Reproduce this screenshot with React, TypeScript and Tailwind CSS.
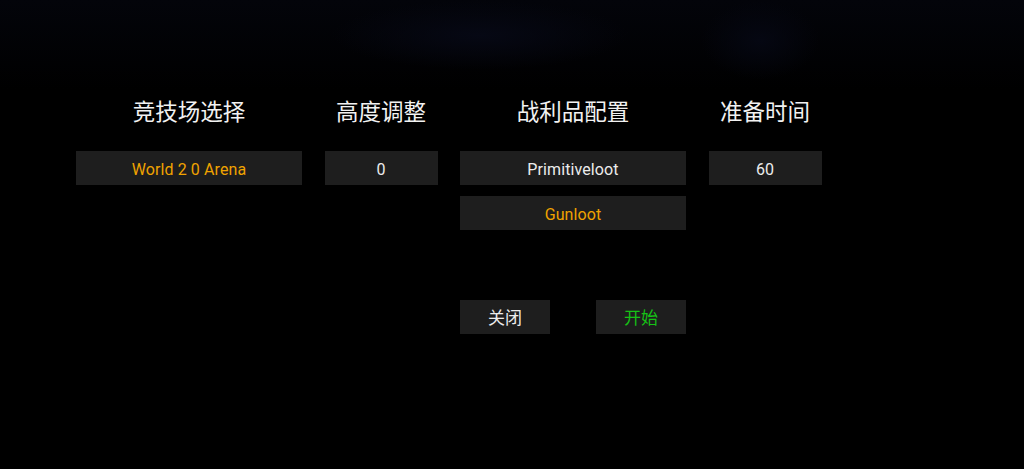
import React from 'react';

const titleFont = { fontFamily: '"Noto Sans CJK SC", "Noto Sans", sans-serif' };

function Cell({ label, width, color = 'text-[#ececec]' }: { label: string; width: string; color?: string }) {
  return (
    <div
      className={`${width} h-[34px] flex items-center justify-center pt-[3px] bg-[#1e1e1e] text-[16px] tracking-[0.1px] ${color}`}
      style={{ fontFamily: 'Roboto, "Noto Sans CJK SC", sans-serif' }}
    >
      {label}
    </div>
  );
}

function Column({ title, children }: { title: string; children: React.ReactNode }) {
  return (
    <div className="flex flex-col items-center">
      <h2 className="h-[32px] leading-[32px] text-[22.5px] text-[#f2f2f2] mb-[25px]" style={titleFont}>
        {title}
      </h2>
      {children}
    </div>
  );
}

export default function App() {
  return (
    <div className="relative w-[1024px] h-[469px] overflow-hidden bg-black">
      {/* faint night-sky texture at the top */}
      <div className="absolute inset-x-0 top-0 h-[90px] bg-gradient-to-b from-[#03040a] to-transparent" />
      <div className="absolute left-[330px] top-0 w-[300px] h-[70px] bg-[radial-gradient(ellipse_at_center,#060814_0%,transparent_70%)]" />
      <div className="absolute left-[700px] top-0 w-[120px] h-[80px] bg-[radial-gradient(ellipse_at_center,#050712_0%,transparent_70%)]" />

      <div className="relative flex gap-[22.5px] pl-[76px] pt-[94px]">
        <Column title="竞技场选择">
          <Cell label="World 2 0 Arena" width="w-[226px]" color="text-[#f0a300]" />
        </Column>
        <Column title="高度调整">
          <Cell label="0" width="w-[113px]" />
        </Column>
        <Column title="战利品配置">
          <div className="flex flex-col gap-[11px]">
            <Cell label="Primitiveloot" width="w-[226px]" />
            <Cell label="Gunloot" width="w-[226px]" color="text-[#f0a300]" />
          </div>
          <div className="flex w-[226px] justify-between mt-[70px]">
            <button className="w-[90px] h-[34px] bg-[#1e1e1e] text-[17px] text-[#ececec]" style={titleFont}>
              关闭
            </button>
            <button className="w-[90px] h-[34px] bg-[#1e1e1e] text-[17px] text-[#16c216]" style={titleFont}>
              开始
            </button>
          </div>
        </Column>
        <Column title="准备时间">
          <Cell label="60" width="w-[113px]" />
        </Column>
      </div>
    </div>
  );
}
